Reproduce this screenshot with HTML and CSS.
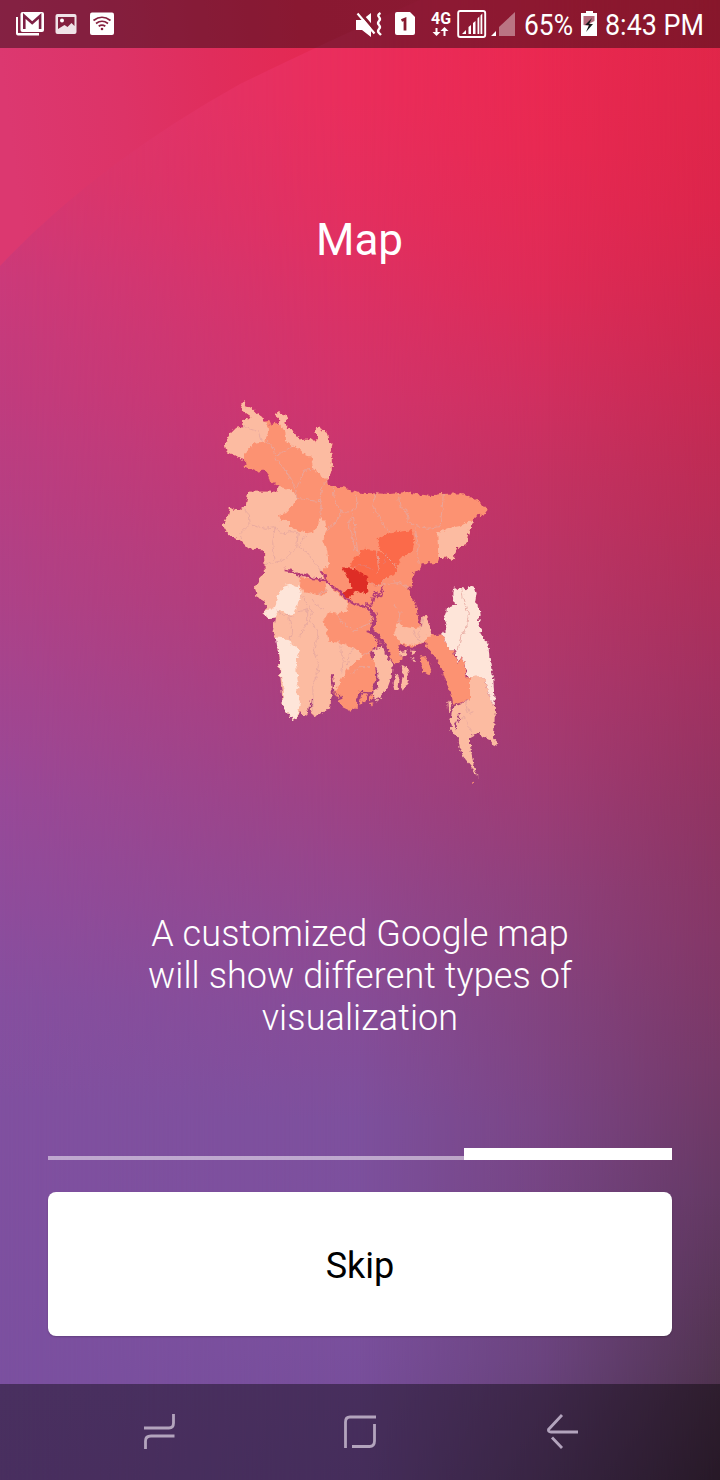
FILE: index.html
```html
<!DOCTYPE html>
<html lang="en">
<head>
<meta charset="utf-8">
<title>Map</title>
<link rel="stylesheet" href="styles.css">
</head>
<body>
<div class="screen">
  <div class="backdrop backdrop-left"></div>
  <div class="backdrop backdrop-center"></div>
  <div class="backdrop backdrop-inner"></div>
  <div class="backdrop backdrop-right"></div>
  <svg class="arc" viewBox="0 0 480 270">
    <defs><linearGradient id="arcFill" gradientUnits="userSpaceOnUse" x1="0" y1="60" x2="460" y2="0">
      <stop offset="0" stop-color="#dc3870"/><stop offset=".25" stop-color="#dd3367"/><stop offset=".45" stop-color="#e02d5c"/><stop offset=".65" stop-color="#e42953"/><stop offset="1" stop-color="#e92a54"/>
    </linearGradient></defs>
    <path d="M0 0H420Q320 45 240 84Q95 165 0 266Z" fill="url(#arcFill)"/>
  </svg>

  <header class="status">
    <svg class="status-icons" viewBox="0 0 720 48">
      <g fill="#fff">
        <path d="M16 17h2v16h21v2.500H18q-2 0-2-2z"/>
        <rect x="20.500" y="12" width="23.500" height="20" rx="2"/>
        <path d="M24.300 29V16l7.900 7 7.900-7V29" fill="none" stroke="#7e2145" stroke-width="2.600"/>
        <rect x="55.500" y="14" width="21" height="20" rx="2" opacity=".88"/>
        <path d="M58 17h16.500v9l-3-3-4 4-3-2-6.500 4z" fill="#83203f"/>
        <circle cx="62" cy="20.500" r="2"/>
        <rect x="90" y="12.500" width="24" height="22.500" rx="2"/>
        <g fill="none" stroke="#85203e" stroke-width="1.700"><path d="M93.500 20.500q8.500-6.500 17 0M96 23.500q6-4.500 12 0M98.700 26.300q3.300-2.500 6.600 0"/></g>
        <circle cx="102" cy="29" r="1.300" fill="#85203e"/>
        <path d="M356 20h6l9-7v24l-9-7h-6z"/>
        <path d="M359.500 12l17 20" stroke="#87192f" stroke-width="3"/>
        <path d="M357.500 13.500l17 20" stroke="#fff" stroke-width="2.200"/>
        <path d="M380.500 13q-3.500 2-1.500 4t0 4 0 4 0 4 0 4l2 2" fill="none" stroke="#fff" stroke-width="2.400"/>
        <path d="M397 12h13l5 5v16q0 2-2 2h-16q-2 0-2-2V14q0-2 2-2z"/>
        <path d="M401.500 20.500l3.500-1.500V30.500" fill="none" stroke="#87192f" stroke-width="2.800"/>
        <path d="M435.500 28v4h-3l4 4 4-4h-3v-4zM443.500 36v-5h-3l4-4 4 4h-3v5z"/>
        <rect x="458.200" y="11" width="27" height="26" rx="2" fill="none" stroke="#fff" stroke-width="1.900"/>
        <path d="M462 34l4-4v4zM468.500 34v-7l2.500-2v9zM473 34V23l2.500-2v13zM477.500 34V18.500l1.800-2V34zM480.500 34V15.500l1.800-2V34zM491 36l5-5v5z"/>
        <path d="M499 36V27l16-15v24z" opacity=".4"/>
        <path d="M586 11h7v2h4v23h-16V13h5z"/>
        <path d="M583.500 16h11v5l-4 2-1 3-6-1z" fill="#b66b7c"/>
        <path d="M592 18l-7 7h4l-3 7 7-8h-4z" fill="#17171a"/>
      </g>
      <text class="network" x="431" y="24" textLength="20" lengthAdjust="spacingAndGlyphs">4G</text>
      <text class="clock" x="524" y="35" textLength="49" lengthAdjust="spacingAndGlyphs">65%</text>
      <text class="clock" x="605" y="35" textLength="99" lengthAdjust="spacingAndGlyphs">8:43 PM</text>
    </svg>
  </header>

  <main class="slide">
    <h1 class="title">Map</h1>
    <svg class="map" viewBox="0 0 900 1200">
      <defs>
        <filter id="rough" x="-5%" y="-5%" width="110%" height="110%" color-interpolation-filters="sRGB">
          <feTurbulence type="fractalNoise" baseFrequency=".08" numOctaves="2" seed="4" result="n"/>
          <feDisplacementMap in="SourceGraphic" in2="n" scale="17" xChannelSelector="R" yChannelSelector="G"/>
        </filter>
        <linearGradient id="water" gradientUnits="userSpaceOnUse" x1="0" y1="450" x2="0" y2="950">
          <stop offset="0" stop-color="#bb3974"/><stop offset="1" stop-color="#a53e7b"/>
        </linearGradient>
      </defs>
      <g filter="url(#rough)">
        <!-- mainland -->
        <path class="mid" d="M100 33L108 50 125 55 140 70 155 80 160 95 175 93 180 105 195 98 210 103 205 85 192 75 205 66 225 75 232 90 222 98 235 115 250 125 262 140 280 150 305 148 315 155 322 140 315 122 328 108 335 122 350 125 355 150 368 165 360 185 365 210 365 240 355 268 356 285 368 290 400 292 420 303 450 308 490 310 540 312 590 306 620 312 660 318 690 312 760 310 790 325 815 340 833 362 825 373 795 377 788 395 775 430 768 465 740 475 735 495 725 512 705 498 698 508 685 502 680 520 635 520 630 538 610 550 605 585 595 600 605 620 620 650 625 690 632 715 637 680 647 678 657 697 662 725 668 737 640 758 610 770 565 765 575 800 570 820 555 812 525 780 500 745 505 775 492 782 480 790 495 820 500 860 490 910 470 905 445 910 440 955 420 962 395 950 373 910 370 860 362 860 365 910 360 955 335 968 312 978 302 960 290 950 295 972 280 978 270 965 265 980 250 990 240 972 228 970 218 940 220 900 210 840 205 790 200 745 188 725 195 705 195 682 175 685 158 670 170 655 165 635 140 620 135 590 150 562 165 550 162 478 115 475 90 450 55 435 38 405 55 375 60 352 75 360 90 360 108 345 115 305 200 305 205 288 180 275 170 240 140 245 108 230 105 212 75 195 50 185 45 165 60 130 75 115 95 110 100 90 125 80 110 70 92 60Z"/>
        <!-- north-west -->
        <path class="light" d="M100 33L108 50 125 55 140 70 155 80 160 95 172 98 174 125 168 150 155 155 130 160 122 175 105 188 105 212 75 195 50 185 45 165 60 130 75 115 95 110 100 90 125 80 110 70 92 60Z"/>
        <path class="light" d="M210 103L205 85 192 75 205 66 225 75 232 90 222 98 235 115 250 125 262 140 280 150 305 148 315 155 322 140 315 122 328 108 335 122 350 125 355 150 368 165 360 185 365 210 365 240 355 268 340 270 330 250 310 238 302 200 285 192 268 178 248 168 228 150 226 125Z"/>
        <!-- west and south-west -->
        <path class="light" d="M203 290L245 298 260 325 245 352 230 368 207 375 213 392 240 393 240 412 265 420 290 430 310 425 325 400 330 385 345 392 350 420 340 450 352 480 355 528 335 540 342 565 348 578 410 635 415 665 385 672 355 667 340 690 352 730 355 755 390 758 430 772 460 795 440 815 415 835 400 860 385 890 373 905 370 860 362 860 365 910 360 955 335 968 312 978 302 960 290 950 295 972 280 978 270 965 265 980 250 990 240 972 228 970 218 940 205 790 200 745 188 725 195 682 175 685 158 670 170 655 165 635 140 620 135 590 150 562 165 550 162 478 115 475 90 450 55 435 38 405 55 375 60 352 75 360 90 360 108 345 115 305 200 305Z"/>
        <path class="mid" d="M270 560L300 568 345 570 350 600 338 618 310 612 280 605 267 587Z"/>
        <path class="pale" d="M217 590L240 584 270 590 275 610 265 635 255 670 235 675 210 660 195 682 175 685 158 670 170 657 195 655 202 620Z"/>
        <path class="pale" d="M197 742L235 748 242 762 262 768 270 785 258 810 260 850 265 880 258 905 270 935 262 980 250 990 240 972 228 970 218 940 222 905 212 850 205 790Z"/>
        <!-- north-east -->
        <path class="light" d="M682 430L715 415 750 408 770 396 790 395 775 430 768 465 740 475 735 495 725 512 705 498 698 508 685 502Z"/>
        <!-- Narsingdi, Gazipur, Kishoreganj -->
        <path class="hot" d="M500 445L530 432 570 425 608 420 612 450 608 485 575 500 565 520 555 555 530 562 515 580 500 590 480 575 455 570 435 535 420 530 435 502 465 476 500 482 520 490 505 470Z"/>
        <path class="hottest" d="M396 532L438 538 450 548 475 560 470 585 476 605 455 612 435 602 420 626 396 615 412 598 425 592Z"/>
        <!-- lower Meghna -->
        <path class="light" d="M552 735L560 700 580 710 610 715 628 712 632 715 637 680 647 678 657 697 662 725 668 737 640 758 610 765 575 762Z"/>
        <path class="border" d="M95 110L120 117 145 125 155 155M172 150L190 180 200 210 225 240 245 272 258 300 260 325 330 335 335 350 330 385M200 195L225 182 248 168M262 290L285 240 310 238M353 270L335 295 328 335M370 292L372 320 380 345 395 365 410 370 440 355 440 310M350 420L380 395 395 365M430 378L435 415 442 480 450 500M498 310L488 355 508 375 525 415 540 425M565 312L570 350 590 360 595 395 615 405 650 415 690 410 695 370 700 312M430 370L415 400 425 430 435 480M615 415L625 470 620 490 628 520M100 355L118 375 120 400 90 430 95 445M120 405L165 415 195 410 210 430 240 425 265 428 260 470 220 510 185 520 165 520M195 410L188 460 195 510M265 470L290 485 330 540M500 482L505 530 500 550M520 490L550 520 560 535M480 575L505 590 530 562M500 590L530 580 570 578 600 595M270 610L305 660 300 690 325 730 310 780 325 820 320 860 308 880 310 960M235 675L245 720 240 750M265 665L300 658M305 625L315 640 340 660M380 672L400 700 430 725 455 710 480 700 485 675 460 640M385 750L400 810 395 850M435 770L420 790 412 825M350 600L325 615M290 435L265 470M550 640L570 665 565 700M460 795L490 780M425 850L450 830 480 830M200 660L220 675 250 680M290 650L290 700 270 740"/>
        <path class="border inside-hot" d="M435 535L450 520 490 540M530 490L520 525"/>
        <!-- rivers -->
        <g class="river">
          <path stroke-width="7" d="M224 540L245 543 265 555 285 555 310 567 345 570 360 585 390 605 410 628 435 642 470 652 485 665"/>
          <path stroke-width="5" d="M331 541L345 558 348 575"/>
          <path stroke-width="12" d="M478 655L495 680 488 710"/>
          <path stroke-width="5" d="M465 650L470 642 485 648M485 645L490 625 510 610 520 590M490 625L490 615 500 605 503 622 518 618 520 605M470 723L490 730"/>
          <path stroke-width="11" d="M487 705L485 725 505 740 522 765 535 800 550 820"/>
          <path stroke-width="14" d="M522 765L535 800 545 825"/>
          <path stroke-width="9" d="M508 775L490 780 485 795 500 820 503 860 492 900"/>
          <path stroke-width="5" d="M366 855L370 900 372 930M390 912L395 925 380 930M305 930L300 960M445 955L445 920 455 905 475 910 495 908"/>
        </g>
        <!-- delta islands -->
        <path class="light" d="M490 780L515 770 525 790 548 825 545 860 530 900 515 918 495 925 490 910 505 890 505 850 488 810ZM555 855L567 860 563 890 566 900 556 900 551 880ZM575 825L590 830 597 850 592 880 578 902 573 890 579 855ZM572 785L590 782 590 795 575 800ZM600 778L618 780 616 795 604 790ZM605 800L620 810 616 816 604 812ZM498 925l6 7-5 6zM510 925l8-2-3 8z"/>
        <path class="mid" d="M535 795L555 780 560 795 572 805 570 818 550 820ZM632 800L645 798 660 825 665 845 655 855 640 845 633 820ZM455 910L475 910 465 935 448 945ZM478 914L490 912 488 930 477 935ZM480 940L490 937 486 950Z"/>
        <!-- Chittagong -->
        <path class="mid" d="M648 738L680 735 697 733 705 755 718 778 732 778 735 800 745 822 752 802 765 820 770 860 780 865 781 930 750 938 730 944 725 915 712 885 695 835 675 800 650 773Z"/>
        <path class="pale" d="M732 592L743 600 750 592 768 598 780 588 795 595 800 610 795 640 808 650 812 675 806 700 822 750 835 760 838 800 850 870 855 950 845 935 832 900 825 870 810 860 775 862 765 820 752 802 742 820 735 778 718 778 705 755 697 733 710 710 703 680 712 655 735 645 730 610Z"/>
        <path class="light" d="M780 862L810 858 825 870 832 900 845 935 855 950 852 1045 865 1060 850 1070 835 1045 815 1040 810 1025 780 1042 780 1070 790 1120 803 1165 785 1130 760 1100 750 1075 745 1045 730 1025 725 1020 720 1000 725 970 735 948 780 930Z"/>
        <path class="light" d="M712 935L724 937 722 955 715 970Z"/>
        <path class="mid" d="M790 1172l5 2v7l-5 1z"/>
        <path class="border" d="M755 592L760 630 775 670 770 710 752 740 745 780M640 680L628 725 625 750 640 758M610 715L620 750M765 932L775 970 790 965M740 975L765 985 775 1010 785 1025"/>
        <path class="river" stroke-width="5" d="M728 960L730 945M740 1020L735 1000 750 990 745 970M575 768L600 775 640 778M590 780L600 805 625 810"/>
      </g>
    </svg>
    <p class="caption">A customized Google map<br>will show different types of<br>visualization</p>
    <div class="progress"><span class="track"></span><span class="current"></span></div>
    <button class="skip">Skip</button>
  </main>

  <nav class="navbar">
    <svg class="nav-icons" viewBox="0 0 480 96">
      <g fill="none" stroke="#b3a4bd" stroke-width="2.800">
        <path d="M24 44H49Q53.500 44 53.500 39V30M54.500 52H31Q25.500 52 25.500 57V65"/>
        <path d="M225.500 64V38Q225.500 33 230 33H256M254.500 40V57Q254.500 62.500 249.500 62.500H232"/>
        <path d="M442 31L428.500 45.500Q428 48 431 48H458M432 53.500L442 64"/>
      </g>
    </svg>
  </nav>
</div>
</body>
</html>
```
FILE: styles.css
```css
* { box-sizing: border-box; }
body { margin: 0; font-family: Roboto, "Noto Sans", sans-serif; }
.screen {
  position: relative;
  display: flex;
  flex-direction: column;
  width: 720px;
  height: 1480px;
  overflow: hidden;
  color: #fff;
}
/* Four vertical ramps blended from left to right */
.backdrop { position: absolute; inset: 0; }
.backdrop-left {
  background: linear-gradient(#df3a72 0, #d63871 180px, #cb3a7a 280px, #c03c7e 400px, #ae4288 600px, #984998 800px, #864f9f 1000px, #8150a0 1100px, #7b50a0 1384px, #7a4f9f 1480px);
}
.backdrop-center {
  background: linear-gradient(#eb2d5b 0, #ea2d5b 100px, #e32f5f 220px, #d2346b 400px, #b73a74 600px, #9e4284 800px, #874c97 1000px, #7d509d 1120px, #7b509d 1300px, #744c98 1480px);
  -webkit-mask-image: linear-gradient(90deg, transparent, #000 50%);
  mask-image: linear-gradient(90deg, transparent, #000 50%);
}
.backdrop-inner {
  background: linear-gradient(#eb2850 0, #e82952 150px, #de2b57 290px, #cf2f5f 400px, #c33262 480px, #b1376a 640px, #a13b73 770px, #8f407b 890px, #83437f 1000px, #7a4585 1120px, #6a437d 1360px, #5d3d6e 1480px);
  -webkit-mask-image: linear-gradient(90deg, transparent 50%, #000 76%);
  mask-image: linear-gradient(90deg, transparent 50%, #000 76%);
}
.backdrop-right {
  background: linear-gradient(#e22749 0, #dc254b 210px, #c92951 380px, #b32e58 550px, #a13160 685px, #903462 810px, #843767 940px, #763968 1066px, #653964 1193px, #50334f 1371px, #422a42 1480px);
  -webkit-mask-image: linear-gradient(90deg, transparent 76%, #000);
  mask-image: linear-gradient(90deg, transparent 76%, #000);
}
.arc { position: absolute; top: 0; left: 0; width: 480px; height: 270px; }
.status { position: relative; height: 48px; background: rgba(0, 0, 0, .4); }
.status-icons { display: block; width: 720px; height: 48px; }
.status text { fill: #fff; }
.clock { font-size: 30px; }
.network { font-size: 16px; font-weight: 700; }
.slide {
  position: relative;
  display: flex;
  flex: 1;
  flex-direction: column;
  align-items: center;
  padding: 166px 48px 48px;
}
.title { margin: 0; padding-right: 1px; font-size: 44px; font-weight: 400; line-height: 52px; }
.map { display: block; width: 300px; height: 400px; margin-top: 124px; }
.caption { margin: 123px 0 0; font-size: 36px; font-weight: 300; line-height: 42px; letter-spacing: .09px; text-align: center; }
.progress { display: flex; align-items: flex-end; width: 624px; height: 12px; margin-top: 109px; }
.track { flex: 2; height: 4px; background: rgba(255, 255, 255, .5); }
.current { flex: 1; height: 12px; background: #fff; }
.skip {
  width: 624px;
  height: 144px;
  margin-top: 32px;
  padding: 3px 0 0;
  border: 0;
  border-radius: 8px;
  background: #fff;
  box-shadow: 0 1px 2px rgba(0, 0, 0, .2);
  color: #000;
  font: 400 36px Roboto, sans-serif;
}
.navbar { position: relative; display: flex; justify-content: center; height: 96px; background: rgba(0, 0, 0, .4); }
.nav-icons { width: 480px; height: 96px; }
.light { fill: #fcbba1; }
.mid { fill: #fc9272; }
.pale { fill: #fee5d9; }
.hot { fill: #fb6a4a; }
.hottest { fill: #de2d26; }
.border { fill: none; stroke: #e6a79f; stroke-width: 2.5; }
.inside-hot { stroke: #e67c73; }
.river { fill: none; stroke: url(#water); stroke-linejoin: round; }
```
